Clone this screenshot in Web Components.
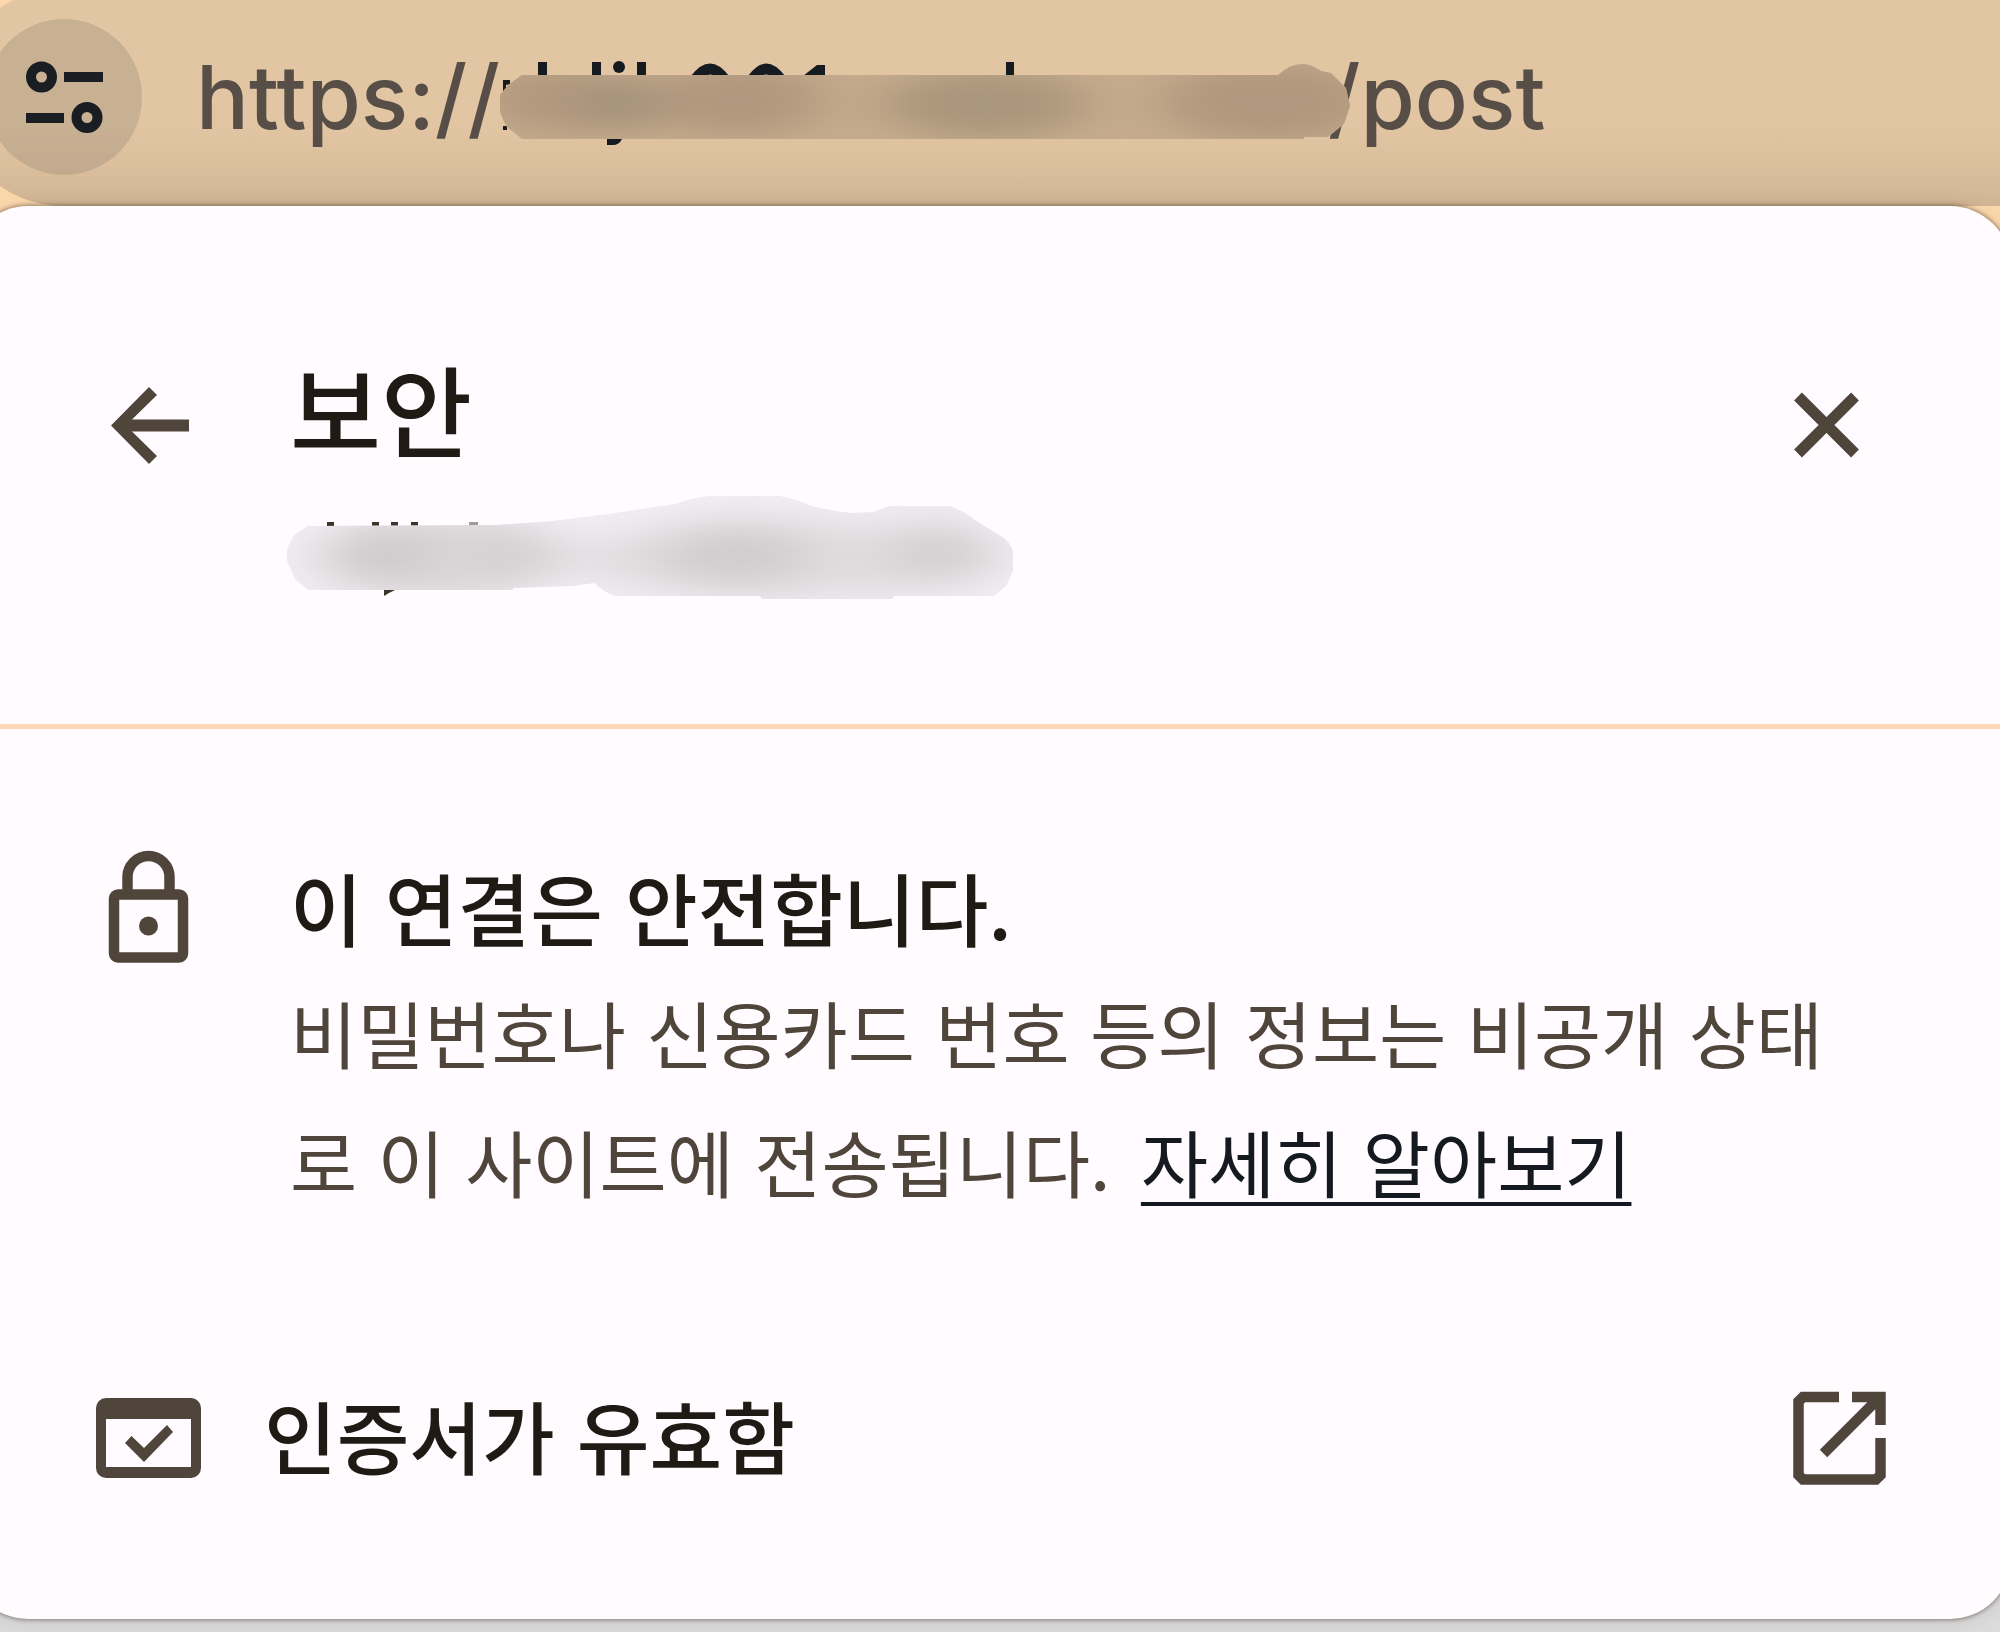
<!DOCTYPE html>
<html lang="ko">
<head>
<meta charset="utf-8">
<meta name="viewport" content="width=device-width, initial-scale=1">
<title>보안</title>
<style>
  body { margin: 0; background: #dcdcdc; overflow: hidden; }
</style>
</head>
<body>
<browser-window>
  <address-bar slot="bar">
    <span slot="before">https://</span>
    <span slot="after">/post</span>
  </address-bar>
  <security-bubble>
    <bubble-header slot="header">보안</bubble-header>
    <connection-info>
      <span slot="title">이 연결은 안전합니다.</span>
      비밀번호나 신용카드 번호 등의 정보는 비공개 상태<wbr>로 이 사이트에 전송됩니다.
      <a slot="link" href="#learn-more">자세히 알아보기</a>
    </connection-info>
    <certificate-row>인증서가 유효함</certificate-row>
  </security-bubble>
</browser-window>

<script>
const define = (name, html) => customElements.define(name, class extends HTMLElement {
  constructor() {
    super();
    this.attachShadow({ mode: 'open' }).innerHTML = html;
  }
});

define('browser-window', `
<style>
  :host {
    display: flex; flex-direction: column; min-height: 100vh; overflow: hidden;
    font-family: "Noto Sans CJK KR", sans-serif; color: #1f1a14;
    background: linear-gradient(#fbd8ac 0 50%, #dcdcdc 50%);
  }
</style>
<slot name="bar"></slot>
<slot></slot>`);

define('address-bar', `
<style>
  :host { display: block; height: 206px; overflow: hidden; }
  .pill {
    display: flex; align-items: center; height: 218px; box-sizing: border-box;
    margin: -12px 0 0 -46px; padding-left: 32px;
    border-radius: 109px 0 0 109px;
    background: linear-gradient(#e2c5a2 0 62%, #dbbf9d 82%, #d0b493 100%);
    font: 500 88px/120px Inter, sans-serif; color: #574f47;
  }
  button {
    flex: none; width: 156px; height: 156px; padding: 0; border: 0; border-radius: 50%;
    background: rgba(30, 36, 44, .13);
  }
  button svg { display: block; width: 100%; height: 100%; }
  .url { display: flex; align-items: center; margin-left: 54px; white-space: nowrap; }
  .smudge { flex: none; position: relative; width: 860px; height: 100px; margin: 0 -28px 0 -4px; }
</style>
<div class="pill">
  <button aria-label="사이트 정보 보기">
    <svg viewBox="-13 19 156 156" fill="none" stroke="#1a1d22" stroke-width="10">
      <circle cx="42.500" cy="77" r="10.500"/>
      <path d="M65 77H104M27 118H65"/>
      <circle cx="88" cy="117.500" r="10.500"/>
    </svg>
  </button>
  <div class="url">
    <slot name="before"></slot>
    <svg class="smudge" viewBox="496 47 860 100" aria-hidden="true">
      <defs>
        <clipPath id="c"><path d="M522 75H1278Q1300 55 1321 71L1331 73L1346 88L1350 106L1344 124L1328 137H1304V139H522L506 126L500 112V95L508 85Z"/></clipPath>
        <filter id="b" x="-50%" y="-50%" width="200%" height="200%"><feGaussianBlur stdDeviation="30 14"/></filter>
      </defs>
      <g fill="#161b20">
        <path d="M538 62h9v14h-9zM592 62h9v14h-9zM637 62h9v14h-9zM1006 62h8v14h-8zM503 80h7v4l-4 1v6h-3zM503 126h4v4h-4zM607 139h15q-3 6-9 6h-6zM803 76l14-11h8v11z"/>
        <circle cx="619" cy="67" r="6"/>
        <path d="M691 76q19-25 38 0zM748 76q18-25 37 0z"/>
      </g>
      <path d="M704 77q6-5 13 0zM760 77q6-5 13 0z" fill="#e2c5a2"/>
      <g clip-path="url(#c)">
        <path fill="#c6ac8d" d="M490 50h870v100H490z"/>
        <g filter="url(#b)">
          <ellipse cx="550" cy="98" rx="75" ry="34" fill="#b39a7f"/>
          <ellipse cx="618" cy="104" rx="45" ry="30" fill="#a5937a"/>
          <ellipse cx="740" cy="100" rx="85" ry="36" fill="#b0987e"/>
          <ellipse cx="985" cy="104" rx="105" ry="34" fill="#aa967b"/>
          <ellipse cx="1270" cy="102" rx="110" ry="40" fill="#b0987e"/>
        </g>
      </g>
    </svg>
    <slot name="after"></slot>
  </div>
</div>`);

define('security-bubble', `
<style>
  :host {
    display: block; position: relative; margin: 0 -11px 0 -33px; border-radius: 61px;
    background: #fffbff; box-shadow: 0 0 4px 1px rgba(60, 45, 30, .5), 0 4px 24px rgba(0, 0, 0, .08);
  }
  .body { padding: 102px 118px 118px 129px; }
</style>
<slot name="header"></slot>
<div class="body"><slot></slot></div>`);

define('bubble-header', `
<style>
  :host {
    display: flex; align-items: flex-start; height: 523px; box-sizing: border-box;
    padding: 133px 132px 0 129px; border-bottom: 5px solid #fbd9b5;
  }
  button { flex: none; padding: 0; border: 0; background: none; width: 106px; height: 106px; margin-top: 33px; }
  button svg { display: block; width: 100%; height: 100%; }
  .text { flex: 1; margin-left: 88px; }
  h1 { margin: 0; font-size: 99px; line-height: 136px; font-weight: 500; }
  .smudge { display: block; width: 740px; height: 110px; margin-top: 18px; overflow: visible; }
</style>
<button aria-label="뒤로">
  <svg viewBox="96 373 106 106" fill="#4f453b"><path d="M111 426.500L149 388L157 396L132 420.500H189V432.500H132L157 457L149 465Z"/></svg>
</button>
<div class="text">
  <h1><slot></slot></h1>
  <svg class="smudge" viewBox="290 494 740 110" aria-hidden="true">
    <defs>
      <clipPath id="c"><path d="M308 527L496 526L553 522L608 515L675 505Q690 499 710 497H780Q796 500 812 507Q830 512 852 514L874 513L888 507H951L965 514L981 525L1001 537Q1010 543 1013 552V572L1006 587L994 597H894L892 600H762L760 597H614L604 592L594 584L573 587L514 589L512 591H308L295 580L287 562V550L294 536Z"/></clipPath>
      <filter id="b" x="-50%" y="-50%" width="200%" height="200%"><feGaussianBlur stdDeviation="26 16"/></filter>
    </defs>
    <path fill="#3c332b" d="M327 523h7v5h-7zM372 523h7v5h-7zM391 523h7v5h-7zM411 523h7v5h-7zM384 591h11l-6 3-5 3z"/>
    <path fill="#a39d9a" d="M469 523h9v5h-9z"/>
    <g clip-path="url(#c)">
      <path fill="#f2edf2" d="M280 490h740v120H280z"/>
      <g filter="url(#b)">
        <ellipse cx="440" cy="558" rx="130" ry="42" fill="#dad6d7"/>
        <ellipse cx="385" cy="554" rx="46" ry="24" fill="#cecaca"/>
        <ellipse cx="510" cy="554" rx="36" ry="24" fill="#d4d0d1"/>
        <ellipse cx="790" cy="560" rx="220" ry="38" fill="#e0dcde"/>
        <ellipse cx="735" cy="555" rx="75" ry="32" fill="#d1cdce"/>
        <ellipse cx="940" cy="553" rx="52" ry="30" fill="#d4d0d1"/>
      </g>
    </g>
  </svg>
</div>
<button aria-label="닫기">
  <svg viewBox="1773 373 106 106" fill="none" stroke="#4f453b" stroke-width="11"><path d="M1798 397.500L1855 454.500M1855 397.500L1798 454.500"/></svg>
</button>`);

define('connection-info', `
<style>
  :host { display: flex; align-items: flex-start; }
  svg { flex: none; width: 106px; height: 130px; margin-top: 12px; }
  .text { flex: 1; margin: 16px 0 0 88px; padding-right: 40px; }
  h2 { margin: 0; font-size: 79px; line-height: 120px; font-weight: 500; }
  p { margin: 0; font-size: 73px; line-height: 129px; color: #4f453b; }
  ::slotted(a) {
    margin-left: 10px; color: #141a1f; text-decoration: underline; text-decoration-thickness: 4px;
    text-underline-offset: 10px; text-decoration-skip-ink: none;
  }
</style>
<svg viewBox="96 843 106 130" fill="none" stroke="#4f453b" stroke-width="10.500" aria-hidden="true">
  <rect x="114" y="894.500" width="69" height="63" rx="4"/>
  <path d="M127.500 893V877a21 21 0 0 1 42 0V893"/>
  <circle cx="148.500" cy="926" r="9.500" fill="#4f453b" stroke="none"/>
</svg>
<div class="text">
  <h2><slot name="title"></slot></h2>
  <p><slot></slot> <slot name="link"></slot></p>
</div>`);

define('certificate-row', `
<style>
  :host { display: block; margin-top: 150px; }
  button {
    display: flex; align-items: center; width: 100%; padding: 0; border: 0; background: none;
    color: inherit; text-align: left; font: 500 79px/120px "Noto Sans CJK KR", sans-serif;
  }
  svg { flex: none; width: 106px; height: 106px; }
  span { flex: 1; margin-left: 62px; padding-bottom: 6px; }
</style>
<button>
  <svg viewBox="96 1386 106 106" fill="#4f453b" aria-hidden="true">
    <path fill-rule="evenodd" d="M106 1399H191a10 10 0 0 1 10 10V1469a10 10 0 0 1-10 10H106a10 10 0 0 1-10-10V1409a10 10 0 0 1 10-10ZM106 1420V1468H191V1420Z"/>
    <path d="M125 1444L131.500 1437L144 1449L167 1426L173 1433L144 1463Z"/>
  </svg>
  <span><slot></slot></span>
  <svg viewBox="1787 1386 106 106" fill="none" stroke="#4f453b" stroke-width="10.500" aria-hidden="true">
    <path d="M1839 1398H1803L1798.500 1402.500V1476L1803 1480.500H1876L1880.500 1476V1439M1852 1398H1880.500V1426M1823.500 1454.500L1878 1400"/>
  </svg>
</button>`);
</script>
</body>
</html>
